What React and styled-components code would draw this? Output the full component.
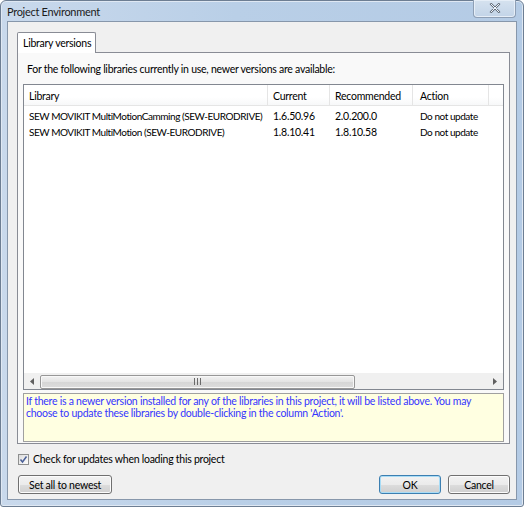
import React from "react";
import styled, { createGlobalStyle } from "styled-components";

const Global = createGlobalStyle`
  html, body { margin: 0; padding: 0; background: #fff; }
  body { font-family: Lato, "Open Sans", sans-serif; font-size: 10.5px; letter-spacing: -0.25px; color: #000; }
  * { box-sizing: border-box; }
`;

const Window = styled.div`
  width: 524px;
  height: 507px;
  display: flex;
  flex-direction: column;
  background: linear-gradient(90deg, #c9d9ec 0%, #b9cfe7 45%, #b4cbe5 100%);
  border: 1px solid #6d7e93;
  border-radius: 6px 6px 3px 3px;
  padding: 0 6px 6px 6px;
  box-shadow: inset 0 0 0 1px #dfe8f3;
`;

const TitleBar = styled.div`
  height: 23px;
  display: flex;
  align-items: center;
  justify-content: space-between;
`;

const Title = styled.span`
  font-size: 11px;
  letter-spacing: -0.3px;
  color: #1b1b1b;
  padding-top: 1px;
`;

const CloseBtn = styled.div`
  width: 43px;
  height: 18px;
  margin-top: -5px;
  margin-right: 1px;
  border: 1px solid #8e9fb5;
  border-top: none;
  border-radius: 0 0 4px 4px;
  background: linear-gradient(#d6e2ef, #c2d4e8);
  display: flex;
  align-items: center;
  justify-content: center;
  box-shadow: inset 0 0 0 1px #e6eef7;
`;

const Client = styled.div`
  flex: 1;
  background: #f0f0f0;
  border: 1px solid #8797ab;
  display: flex;
  flex-direction: column;
  padding: 10px 6px 5px 9px;
`;

const TabStrip = styled.div`
  display: flex;
  height: 20px;
  position: relative;
  z-index: 1;
`;

const Tab = styled.div`
  width: 79px;
  height: 21px;
  border: 1px solid #898c95;
  border-bottom: none;
  border-radius: 2px 2px 0 0;
  background: #fff;
  padding: 4px 0 0 5px;
  white-space: nowrap;
`;

const Panel = styled.div`
  height: 392px;
  border: 1px solid #898c95;
  background: #f9f9f9;
  display: flex;
  flex-direction: column;
  padding: 0 5px 0 5px;
`;

const Intro = styled.div`
  height: 31px;
  line-height: 33px;
  padding-left: 4px;
  white-space: nowrap;
`;

const ListBox = styled.div`
  height: 306px;
  border: 1px solid #828790;
  background: #fff;
  display: flex;
  flex-direction: column;
`;

const HeaderRow = styled.div`
  display: flex;
  height: 21px;
  border-bottom: 1px solid #e5e5e5;
  background: linear-gradient(#fff, #fff 60%, #f7f8f9);
`;

const HeaderCell = styled.div`
  width: ${(p) => p.$w}px;
  flex: ${(p) => (p.$grow ? 1 : "none")};
  border-right: ${(p) => (p.$grow ? "none" : "1px solid #e5e5e5")};
  padding-left: ${(p) => p.$pl}px;
  padding-top: 2px;
  line-height: 19px;
  white-space: nowrap;
`;

const Rows = styled.div`
  flex: 1;
  padding-top: 2px;
`;

const Row = styled.div`
  display: flex;
  height: 16px;
  line-height: 17px;
`;

const Cell = styled.div`
  width: ${(p) => p.$w}px;
  flex: none;
  padding-left: ${(p) => p.$pl}px;
  white-space: nowrap;
  overflow: hidden;
  font-size: ${(p) => (p.$tight ? "10px" : "10.5px")};
  letter-spacing: ${(p) => (p.$tight ? "-0.45px" : "-0.25px")};
`;

const HScroll = styled.div`
  height: 16px;
  display: flex;
  align-items: center;
  background: #f0f0f0;
  border-top: 1px solid #f0f0f0;
`;

const Arrow = styled.div`
  width: 16px;
  height: 15px;
  display: flex;
  align-items: center;
  justify-content: center;
`;

const Track = styled.div`
  flex: 1;
  height: 15px;
  display: flex;
  align-items: center;
`;

const Thumb = styled.div`
  width: 315px;
  height: 14px;
  border: 1px solid #979797;
  border-radius: 2px;
  background: linear-gradient(#f2f2f2, #e3e3e3 50%, #d6d6d6 51%, #dcdcdc);
  display: flex;
  align-items: center;
  justify-content: center;
  box-shadow: inset 0 0 0 1px #f8f8f8;
`;

const Info = styled.div`
  margin-top: 3px;
  height: 49px;
  border: 1px solid #a0a0a0;
  background: #ffffe1;
  color: #3535ff;
  padding: 1px 25px 0 2px;
  line-height: 12px;
`;

const CheckRow = styled.label`
  display: flex;
  align-items: center;
  gap: 4px;
  margin-top: 9px;
  padding-left: 1px;
  height: 13px;
  line-height: 15px;
`;

const Box = styled.span`
  width: 11px;
  height: 11px;
  border: 1px solid #8e8f8f;
  background: linear-gradient(135deg, #dcdcdc, #fdfdfd);
  display: flex;
  align-items: center;
  justify-content: center;
`;

const ButtonRow = styled.div`
  display: flex;
  align-items: center;
  margin-top: 9px;
  padding-left: 1px;
  gap: 7px;
`;

const Button = styled.div`
  width: ${(p) => p.$w}px;
  height: 19px;
  border: 1px solid ${(p) => (p.$default ? "#3c7fb1" : "#707070")};
  border-radius: 3px;
  background: linear-gradient(#f2f2f2, #ebebeb 50%, #dddddd 51%, #cfcfcf);
  box-shadow: inset 0 0 0 1px ${(p) => (p.$default ? "#a8dcf6" : "#fcfcfc")};
  display: flex;
  align-items: center;
  justify-content: center;
  margin-left: ${(p) => (p.$push ? "auto" : "0")};
`;

const cols = [
  { w: 244, pl: 5, tight: true },
  { w: 62, pl: 5 },
  { w: 83, pl: 5 },
  { w: 76, pl: 7, tight: true },
];

const rows = [
  ["SEW MOVIKIT MultiMotionCamming (SEW-EURODRIVE)", "1.6.50.96", "2.0.200.0", "Do not update"],
  ["SEW MOVIKIT MultiMotion (SEW-EURODRIVE)", "1.8.10.41", "1.8.10.58", "Do not update"],
];

export default function App() {
  return (
    <>
      <Global />
      <Window>
        <TitleBar>
          <Title>Project Environment</Title>
          <CloseBtn>
            <svg width="12" height="10" viewBox="0 0 12 10">
              <path d="M2 1 L10 9 M10 1 L2 9" stroke="#5f6b7a" strokeWidth="2.4" strokeLinecap="round" />
              <path d="M2 1 L10 9 M10 1 L2 9" stroke="#f4f7fb" strokeWidth="1" strokeLinecap="round" />
            </svg>
          </CloseBtn>
        </TitleBar>
        <Client>
          <TabStrip>
            <Tab>Library versions</Tab>
          </TabStrip>
          <Panel>
            <Intro>For the following libraries currently in use, newer versions are available:</Intro>
            <ListBox>
              <HeaderRow>
                <HeaderCell $w={cols[0].w} $pl={cols[0].pl}>Library</HeaderCell>
                <HeaderCell $w={cols[1].w} $pl={cols[1].pl}>Current</HeaderCell>
                <HeaderCell $w={cols[2].w} $pl={cols[2].pl}>Recommended</HeaderCell>
                <HeaderCell $w={cols[3].w} $pl={cols[3].pl}>Action</HeaderCell>
                <HeaderCell $grow $pl={0} />
              </HeaderRow>
              <Rows>
                {rows.map((r, i) => (
                  <Row key={i}>
                    {r.map((c, j) => (
                      <Cell key={j} $w={cols[j].w} $pl={cols[j].pl} $tight={cols[j].tight}>{c}</Cell>
                    ))}
                  </Row>
                ))}
              </Rows>
              <HScroll>
                <Arrow>
                  <svg width="4" height="7" viewBox="0 0 4 7"><path d="M4 0 L0 3.5 L4 7 Z" fill="#606060" /></svg>
                </Arrow>
                <Track>
                  <Thumb>
                    <svg width="7" height="7" viewBox="0 0 7 7">
                      <path d="M0.5 0 V7 M3.5 0 V7 M6.5 0 V7" stroke="#6a6a6a" strokeWidth="1" />
                    </svg>
                  </Thumb>
                </Track>
                <Arrow>
                  <svg width="4" height="7" viewBox="0 0 4 7"><path d="M0 0 L4 3.5 L0 7 Z" fill="#606060" /></svg>
                </Arrow>
              </HScroll>
            </ListBox>
            <Info>
              If there is a newer version installed for any of the libraries in this project, it will be listed above. You may choose to update these libraries by double-clicking in the column 'Action'.
            </Info>
          </Panel>
          <CheckRow>
            <Box>
              <svg width="9" height="9" viewBox="0 0 9 9">
                <path d="M1.5 4.5 L3.5 7 L7.5 1.5" stroke="#4a5f97" strokeWidth="1.5" fill="none" />
              </svg>
            </Box>
            Check for updates when loading this project
          </CheckRow>
          <ButtonRow>
            <Button $w={94}>Set all to newest</Button>
            <Button $w={62} $default $push>OK</Button>
            <Button $w={62}>Cancel</Button>
          </ButtonRow>
        </Client>
      </Window>
    </>
  );
}
